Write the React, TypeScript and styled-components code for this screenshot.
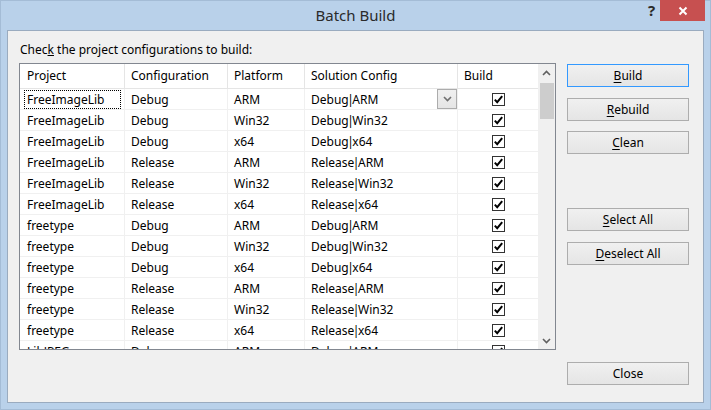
import React from "react";
import styled, { createGlobalStyle } from "styled-components";

const Global = createGlobalStyle`
  html, body { margin: 0; padding: 0; background: #b9d1ea; }
  body { font-family: "Segoe UI", "Noto Sans", "DejaVu Sans", sans-serif; font-size: 12px; color: #000; }
  * { box-sizing: border-box; }
`;

const Window = styled.div`
  width: 711px;
  height: 410px;
  background: #b9d1ea;
  border: 1px solid #a4bcd6;
  display: flex;
  flex-direction: column;
  padding: 0 6px 6px 6px;
`;

const TitleBar = styled.div`
  height: 29px;
  position: relative;
  display: flex;
  align-items: center;
  justify-content: center;
`;

const Title = styled.div`
  font-size: 15px;
  color: #2a2a2a;
  margin-top: -1px;
`;

const Caption = styled.div`
  position: absolute;
  right: -1px;
  top: -1px;
  display: flex;
  align-items: flex-start;
`;

const HelpGlyph = styled.div`
  width: 17px;
  height: 20px;
  font-size: 15px;
  font-weight: bold;
  color: #2a2a2a;
  display: flex;
  align-items: center;
  justify-content: center;
`;

const CloseBtn = styled.div`
  width: 45px;
  height: 21px;
  background: #c75050;
  display: flex;
  align-items: center;
  justify-content: center;
`;

const Client = styled.div`
  flex: 1;
  background: #f0f0f0;
  border: 1px solid #9aabbf;
  padding: 11px 0 0 11px;
  display: flex;
  flex-direction: column;
`;

const Label = styled.div`
  height: 16px;
  line-height: 16px;
  margin-left: 1px;
  margin-bottom: 5px;
`;

const Body = styled.div`
  display: flex;
  gap: 11px;
`;

const ListBox = styled.div`
  width: 537px;
  height: 287px;
  border: 1px solid #828790;
  background: #fff;
  display: flex;
  overflow: hidden;
`;

const GridArea = styled.div`
  flex: 1;
  display: flex;
  flex-direction: column;
  overflow: hidden;
`;

const COLS = "105px 103px 77px 153px 1fr";

const HeaderRow = styled.div`
  display: grid;
  grid-template-columns: ${COLS};
  height: 25px;
  border-bottom: 1px solid #e5e5e5;
  flex-shrink: 0;
`;

const HeaderCell = styled.div<{ $first?: boolean }>`
  border-right: 1px solid #e5e5e5;
  padding-left: ${p => p.$first ? 7 : 6}px;
  padding-bottom: 1px;
  display: flex;
  align-items: center;
  &:last-child { border-right: none; }
`;

const Row = styled.div`
  display: grid;
  grid-template-columns: ${COLS};
  height: 21px;
  border-bottom: 1px solid #f0f0f0;
  flex-shrink: 0;
`;

const Cell = styled.div<{ $first?: boolean; $center?: boolean }>`
  border-right: 1px solid #f0f0f0;
  padding-left: ${p => p.$first ? 7 : 6}px;
  display: flex;
  align-items: center;
  justify-content: ${p => p.$center ? "center" : "flex-start"};
  position: relative;
  white-space: nowrap;
  &:last-child { border-right: none; padding-left: 0; }
`;

const FocusCell = styled(Cell)`
  padding: 1px 3px 1px 4px;
`;

const FocusBox = styled.div`
  flex: 1;
  height: 100%;
  border: 1px dotted #000;
  padding-left: 2px;
  display: flex;
  align-items: center;
`;

const Pipe = styled.span`
  margin: 0 -1.5px;
`;

const DropButton = styled.div`
  position: absolute;
  right: 0;
  top: 0;
  width: 20px;
  height: 20px;
  border: 1px solid #acacac;
  background: linear-gradient(#f0f0f0, #e5e5e5);
  display: flex;
  align-items: center;
  justify-content: center;
`;

const Check = styled.div`
  width: 13px;
  height: 13px;
  border: 1px solid #333;
  background: #fff;
  display: flex;
  align-items: center;
  justify-content: center;
`;

const ScrollBar = styled.div`
  width: 17px;
  background: #f0f0f0;
  display: flex;
  flex-direction: column;
  align-items: center;
  flex-shrink: 0;
`;

const Arrow = styled.div`
  width: 17px;
  height: 17px;
  display: flex;
  align-items: center;
  justify-content: center;
  flex-shrink: 0;
`;

const Track = styled.div`
  flex: 1;
  width: 100%;
  padding: 2px 1px 0 2px;
`;

const Thumb = styled.div`
  height: 36px;
  background: #cdcdcd;
`;

const ButtonColumn = styled.div`
  width: 122px;
  padding-top: 1px;
  display: flex;
  flex-direction: column;
`;

const Button = styled.div<{ $mt?: number; $default?: boolean }>`
  height: 23px;
  margin-top: ${p => p.$mt || 0}px;
  border: 1px solid ${p => p.$default ? "#3399ff" : "#adadad"};
  background: linear-gradient(#f0f0f0, #e5e5e5);
  display: flex;
  align-items: center;
  justify-content: center;
  color: #000;
  & u { text-decoration: underline; text-underline-offset: 2px; }
`;

const Chevron = ({ up, color = "#606060" }: { up?: boolean; color?: string }) => (
  <svg width="9" height="6" viewBox="0 0 9 6">
    <path d={up ? "M1 5 L4.5 1.5 L8 5" : "M1 1 L4.5 4.5 L8 1"} fill="none" stroke={color} strokeWidth="1.6" />
  </svg>
);

const CheckMark = () => (
  <svg width="11" height="11" viewBox="0 0 11 11">
    <path d="M1.8 5.6 L4.2 8.2 L9.2 2.2" fill="none" stroke="#000" strokeWidth="2" />
  </svg>
);

type R = [string, string, string];
const rows: R[] = [
  ["FreeImageLib", "Debug", "ARM"],
  ["FreeImageLib", "Debug", "Win32"],
  ["FreeImageLib", "Debug", "x64"],
  ["FreeImageLib", "Release", "ARM"],
  ["FreeImageLib", "Release", "Win32"],
  ["FreeImageLib", "Release", "x64"],
  ["freetype", "Debug", "ARM"],
  ["freetype", "Debug", "Win32"],
  ["freetype", "Debug", "x64"],
  ["freetype", "Release", "ARM"],
  ["freetype", "Release", "Win32"],
  ["freetype", "Release", "x64"],
  ["LibJPEG", "Debug", "ARM"],
];

export default function App() {
  return (
    <>
      <Global />
      <Window>
        <TitleBar>
          <Title>Batch Build</Title>
          <Caption>
            <HelpGlyph>?</HelpGlyph>
            <CloseBtn>
              <svg width="10" height="10" viewBox="0 0 10 10">
                <path d="M1.5 1.5 L8.5 8.5 M8.5 1.5 L1.5 8.5" stroke="#fff" strokeWidth="2" />
              </svg>
            </CloseBtn>
          </Caption>
        </TitleBar>
        <Client>
          <Label>Chec<u>k</u> the project configurations to build:</Label>
          <Body>
            <ListBox>
              <GridArea>
                <HeaderRow>
                  <HeaderCell $first>Project</HeaderCell>
                  <HeaderCell>Configuration</HeaderCell>
                  <HeaderCell>Platform</HeaderCell>
                  <HeaderCell>Solution Config</HeaderCell>
                  <HeaderCell>Build</HeaderCell>
                </HeaderRow>
                {rows.map((r, i) => (
                  <Row key={i}>
                    {i === 0 ? (
                      <FocusCell><FocusBox>{r[0]}</FocusBox></FocusCell>
                    ) : (
                      <Cell $first>{r[0]}</Cell>
                    )}
                    <Cell>{r[1]}</Cell>
                    <Cell>{r[2]}</Cell>
                    <Cell>
                      {r[1]}<Pipe>|</Pipe>{r[2]}
                      {i === 0 && (
                        <DropButton><Chevron color="#707070" /></DropButton>
                      )}
                    </Cell>
                    <Cell $center>
                      <Check><CheckMark /></Check>
                    </Cell>
                  </Row>
                ))}
              </GridArea>
              <ScrollBar>
                <Arrow><Chevron up /></Arrow>
                <Track><Thumb /></Track>
                <Arrow><Chevron /></Arrow>
              </ScrollBar>
            </ListBox>
            <ButtonColumn>
              <Button $default><u>B</u>uild</Button>
              <Button $mt={11}><u>R</u>ebuild</Button>
              <Button $mt={10}><u>C</u>lean</Button>
              <Button $mt={54}><u>S</u>elect All</Button>
              <Button $mt={11}><u>D</u>eselect All</Button>
              <Button $mt={97}>Close</Button>
            </ButtonColumn>
          </Body>
        </Client>
      </Window>
    </>
  );
}
